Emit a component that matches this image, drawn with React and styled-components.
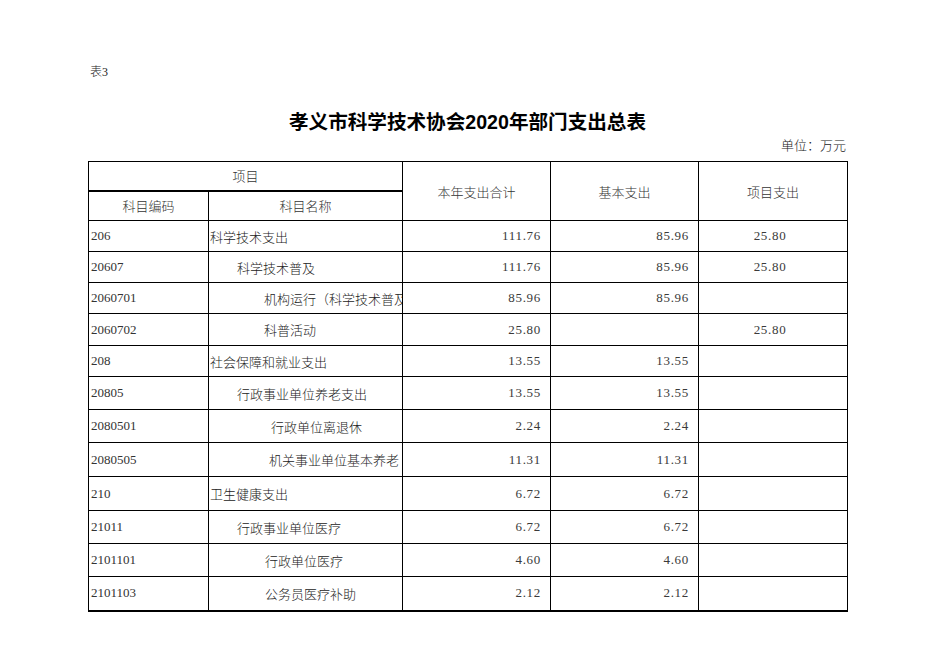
import styled, { createGlobalStyle } from "styled-components";

const GlobalStyle = createGlobalStyle`
  html, body {
    margin: 0;
    padding: 0;
    background: #fff;
  }
  body {
    font-family: "Liberation Serif", "Noto Sans CJK SC", serif;
    color: #222;
  }
`;

const Page = styled.div`
  width: 759px;
  padding: 64px 0 0 88px;
`;

const SheetLabel = styled.div`
  font-size: 12px;
  line-height: 16px;
  padding-left: 2px;
  font-weight: 300;
`;

const Title = styled.h1`
  margin: 29px 0 0;
  text-align: center;
  font-family: "Liberation Sans", "Noto Sans CJK SC", sans-serif;
  font-size: 19.6px;
  line-height: 26px;
  font-weight: 700;
  color: #000;
`;

const Unit = styled.div`
  margin-top: 3px;
  text-align: right;
  font-size: 13px;
  line-height: 16px;
  font-weight: 300;
  padding-right: 1px;
`;

const Table = styled.table`
  margin-top: 7px;
  border-collapse: collapse;
  table-layout: fixed;
  width: 759px;
  border-bottom: 2px solid #000;
  font-size: 13px;
  font-weight: 300;
`;

const HeadCell = styled.th`
  border: 1px solid #000;
  font-weight: 300;
  text-align: center;
  padding: 0;
  color: #333;
  ${(p) => p.$thick && "border-bottom: 2px solid #000;"}
`;

const Row = styled.tr`
  height: ${(p) => p.$h}px;
`;

const HeadRow = styled.tr`
  height: ${(p) => p.$h}px;
`;

const CodeCell = styled.td`
  border: 1px solid #000;
  padding: 0 0 0 2px;
  white-space: nowrap;
  color: #333;
`;

const NameCell = styled.td`
  border: 1px solid #000;
  padding: 0 0 0 ${(p) => p.$indent}px;
  white-space: nowrap;
  overflow: hidden;
`;

const AmountCell = styled.td`
  border: 1px solid #000;
  text-align: ${(p) => (p.$center ? "center" : "right")};
  padding: 0 ${(p) => (p.$center ? 6 : 9)}px 0 0;
  letter-spacing: 0.7px;
  white-space: nowrap;
  color: #3a3a3a;
`;

const rows = [
  { code: "206", name: "科学技术支出", indent: 1, total: "111.76", basic: "85.96", project: "25.80", h: 31 },
  { code: "20607", name: "科学技术普及", indent: 28, total: "111.76", basic: "85.96", project: "25.80", h: 31 },
  { code: "2060701", name: "机构运行（科学技术普及）", indent: 55, total: "85.96", basic: "85.96", project: "", h: 31 },
  { code: "2060702", name: "科普活动", indent: 55, total: "25.80", basic: "", project: "25.80", h: 32 },
  { code: "208", name: "社会保障和就业支出", indent: 1, total: "13.55", basic: "13.55", project: "", h: 31 },
  { code: "20805", name: "行政事业单位养老支出", indent: 28, total: "13.55", basic: "13.55", project: "", h: 33 },
  { code: "2080501", name: "行政单位离退休", indent: 62, total: "2.24", basic: "2.24", project: "", h: 33 },
  { code: "2080505", name: "机关事业单位基本养老", indent: 60, total: "11.31", basic: "11.31", project: "", h: 34 },
  { code: "210", name: "卫生健康支出", indent: 1, total: "6.72", basic: "6.72", project: "", h: 34 },
  { code: "21011", name: "行政事业单位医疗", indent: 28, total: "6.72", basic: "6.72", project: "", h: 33 },
  { code: "2101101", name: "行政单位医疗", indent: 56, total: "4.60", basic: "4.60", project: "", h: 33 },
  { code: "2101103", name: "公务员医疗补助", indent: 56, total: "2.12", basic: "2.12", project: "", h: 34 },
];

export default function App() {
  return (
    <>
      <GlobalStyle />
      <Page>
        <SheetLabel>表3</SheetLabel>
        <Title>孝义市科学技术协会2020年部门支出总表</Title>
        <Unit>单位：万元</Unit>
        <Table>
          <colgroup>
            <col style={{ width: 120 }} />
            <col style={{ width: 194 }} />
            <col style={{ width: 148 }} />
            <col style={{ width: 148 }} />
            <col style={{ width: 149 }} />
          </colgroup>
          <thead>
            <HeadRow $h={29}>
              <HeadCell colSpan={2} $thick>项目</HeadCell>
              <HeadCell rowSpan={2}>本年支出合计</HeadCell>
              <HeadCell rowSpan={2}>基本支出</HeadCell>
              <HeadCell rowSpan={2}>项目支出</HeadCell>
            </HeadRow>
            <HeadRow $h={30}>
              <HeadCell>科目编码</HeadCell>
              <HeadCell>科目名称</HeadCell>
            </HeadRow>
          </thead>
          <tbody>
            {rows.map((r) => (
              <Row key={r.code} $h={r.h}>
                <CodeCell>{r.code}</CodeCell>
                <NameCell $indent={r.indent}>{r.name}</NameCell>
                <AmountCell>{r.total}</AmountCell>
                <AmountCell>{r.basic}</AmountCell>
                <AmountCell $center>{r.project}</AmountCell>
              </Row>
            ))}
          </tbody>
        </Table>
      </Page>
    </>
  );
}
